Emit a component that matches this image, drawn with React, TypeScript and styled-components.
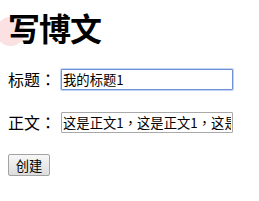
import styled, { createGlobalStyle } from "styled-components";

const GlobalStyle = createGlobalStyle`
  html, body {
    margin: 0;
    padding: 0;
    background: #ffffff;
  }
  body {
    font-family: "Noto Sans CJK SC", "Liberation Sans", sans-serif;
    color: #000;
  }
`;

const Page = styled.div`
  position: relative;
  width: 259px;
  height: 201px;
  padding: 0 8px;
  box-sizing: border-box;
  overflow: hidden;
  display: flex;
  flex-direction: column;
`;

// faint pink blob behind the heading (cursor highlight in the shot)
const Blob = styled.div`
  position: absolute;
  left: -4px;
  top: 17px;
  width: 29px;
  height: 29px;
  border-radius: 50%;
  background: #fbe1e1;
`;

const Title = styled.h1`
  position: relative;
  margin: 9px 0 0;
  font-size: 32px;
  line-height: 36px;
  font-weight: 700;
  letter-spacing: -1px;
`;

const Row = styled.div<{ $top: number }>`
  display: flex;
  align-items: center;
  gap: 5px;
  height: 21px;
  margin-top: ${(p) => p.$top}px;
`;

const Label = styled.label`
  font-size: 16px;
  line-height: 21px;
  width: 48px;
  white-space: nowrap;
`;

// centred full-width punctuation, as in the shot
const Colon = styled.span`
  font-family: "Noto Sans CJK TC", sans-serif;
`;

const Field = styled.input<{ $focus?: boolean }>`
  width: 172px;
  height: 21px;
  box-sizing: border-box;
  padding: 0 1px;
  margin: 0;
  font-family: "Noto Sans CJK TC", "Liberation Sans", sans-serif;
  font-size: 13.33px;
  color: #000;
  background: #fff;
  border: 1px solid ${(p) => (p.$focus ? "#6e93d6" : "#a9a9a9")};
  box-shadow: ${(p) => (p.$focus ? "0 0 0 1px #c3d4f2" : "none")};
  border-radius: 1px;
  outline: none;
`;

const Button = styled.button`
  align-self: flex-start;
  margin-top: 21px;
  width: 42px;
  height: 22px;
  padding: 0;
  font-family: "Noto Sans CJK SC", "Liberation Sans", sans-serif;
  font-size: 13.33px;
  color: #000;
  background: linear-gradient(#f7f7f7, #dddddd);
  border: 1px solid #a3a3a3;
  border-radius: 2px;
`;

export default function App() {
  return (
    <>
      <GlobalStyle />
      <Page>
        <Blob />
        <Title>写博文</Title>
        <Row $top={24}>
          <Label>
            标题<Colon>：</Colon>
          </Label>
          <Field $focus defaultValue="我的标题1" />
        </Row>
        <Row $top={22}>
          <Label>
            正文<Colon>：</Colon>
          </Label>
          <Field defaultValue="这是正文1，这是正文1，这是正文1，这是正文1" />
        </Row>
        <Button>创建</Button>
      </Page>
    </>
  );
}
